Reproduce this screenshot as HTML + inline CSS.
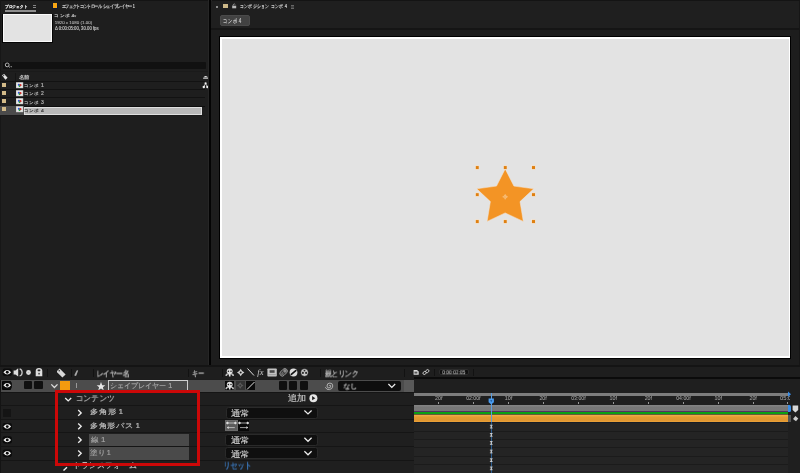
<!DOCTYPE html>
<html><head><meta charset="utf-8">
<style>
*{margin:0;padding:0;box-sizing:border-box}
html,body{width:800px;height:473px;overflow:hidden;background:#1d1d1d;font-family:"Liberation Sans",sans-serif;color:#bdbdbd;position:relative}
.a{position:absolute}
.t{position:absolute;white-space:nowrap;line-height:1;transform-origin:0 0}
svg{position:absolute;overflow:visible}
.s{will-change:transform}
.s text{stroke-linejoin:round}
</style></head><body>
<!-- ============ PROJECT PANEL ============ -->
<div class="a" style="left:0;top:0;width:209px;height:365px;background:#1e1e1e"></div>
<div class="a" style="left:0;top:0;width:800px;height:1px;background:#141414"></div>
<div class="a" style="left:0;top:0;width:1px;height:365px;background:#171717"></div>
<svg class="s" width="1" height="1" style="left:0;top:0;--b:5 4.4 27.5 8.75"><text fill="#d8d8d8" font-weight="700" font-size="4.265" transform="translate(4.729 8.068) scale(0.9065 1)" stroke="#d8d8d8" stroke-width="0.200">プロジェクト</text></svg>
<div class="a" style="left:4.5px;top:10px;width:31.5px;height:1.5px;background:#8e8e8e"></div>
<div class="a" style="left:33.4px;top:4.8px;width:2.9px;height:4.2px;background:#858585"></div>
<div class="a" style="left:33.4px;top:5.9px;width:2.9px;height:0.65px;background:#1e1e1e"></div>
<div class="a" style="left:33.4px;top:7.6px;width:2.9px;height:0.65px;background:#1e1e1e"></div>
<div class="a" style="left:52.3px;top:2.8px;width:5.6px;height:5.8px;background:#101830"></div><div class="a" style="left:52.9px;top:3.3px;width:4.4px;height:4.8px;background:#f7a614"></div>
<svg class="s" width="1" height="1" style="left:0;top:0;--b:62 4.5 139.4 9"><text fill="#cccccc" font-weight="400" font-size="4.545" transform="translate(61.734 8.364) scale(0.8373 1)" stroke="#cccccc" stroke-width="0.200">エフェクトコントロール シェイプレイヤー 1</text></svg>
<!-- thumbnail -->
<div class="a" style="left:2px;top:13.5px;width:51px;height:29.5px;background:#050505"></div>
<div class="a" style="left:2.5px;top:14px;width:49.5px;height:28px;background:#fafafa"></div>
<div class="a" style="left:3.7px;top:15.3px;width:47.3px;height:25.5px;background:#e3e3e3"></div>
<svg class="s" width="1" height="1" style="left:0;top:0;--b:55 13.75 73 17.5"><text fill="#c4c4c4" font-weight="400" font-size="4.213" transform="translate(54.274 17.037) scale(1.1491 1)" stroke="#c4c4c4" stroke-width="0.200">コンポ 4</text></svg>
<svg style="left:0;top:0" width="1" height="1"><path d="M73.9 15.6 H76.3 L75.1 17.2Z" fill="#c8c8c8"/></svg>
<svg class="s" width="1" height="1" style="left:0;top:0;--b:55 20.6 92 24.4"><text fill="#bdbdbd" font-weight="400" font-size="4.043" transform="translate(54.687 23.551) scale(1.1065 1)" stroke="#bdbdbd" stroke-width="0.060">1920 x 1080 (1.00)</text></svg>
<svg class="s" width="1" height="1" style="left:0;top:0;--b:55 26.25 98.75 30.6"><text fill="#bdbdbd" font-weight="400" font-size="4.628" transform="translate(54.915 29.628) scale(0.9186 1)" stroke="#bdbdbd" stroke-width="0.200">Δ 0:00:05:00, 30.00 fps</text></svg>
<!-- search -->
<div class="a" style="left:2.5px;top:62px;width:203.5px;height:6.8px;background:#111;border-radius:1px"></div>
<svg style="left:0;top:0" width="1" height="1"><g stroke="#cfcfcf" fill="none" stroke-width="0.85"><circle cx="7.2" cy="64.9" r="1.9"/><line x1="8.6" y1="66.3" x2="9.9" y2="67.5"/></g><path d="M10.2 66.2 L12.2 66.2 L11.2 67.4Z" fill="#aaa"/></svg>
<!-- header row -->
<div class="a" style="left:0;top:70.5px;width:209px;height:1px;background:#1a1a1a"></div>
<svg style="left:0;top:0" width="1" height="1"><path d="M2 75.2 L4.2 74 L7.6 77.8 L5.4 79.8 Z" fill="#e6e6e6"/><circle cx="3.7" cy="75.6" r="0.6" fill="#1e1e1e"/></svg>
<div class="a" style="left:15px;top:73px;width:1px;height:8px;background:#151515"></div>
<svg class="s" width="1" height="1" style="left:0;top:0;--b:18.75 75.3 29 80"><text fill="#c4c4c4" font-weight="400" font-size="4.947" transform="translate(18.697 79.357) scale(1.0625 1)" stroke="#c4c4c4" stroke-width="0.200">名前</text></svg>
<svg style="left:0;top:0" width="1" height="1"><path d="M203.1 77.6 Q205.7 74.6 208.3 77.6 Z" fill="#eee"/><rect x="203.1" y="78" width="5.2" height="0.7" fill="#ddd"/>
<g fill="#eee"><circle cx="205.6" cy="83.3" r="1.1"/><circle cx="203.8" cy="87" r="1.2"/><circle cx="207.4" cy="87" r="1.2"/></g><path d="M205.6 83.3 L203.8 87 M205.6 83.3 L207.4 87" stroke="#eee" stroke-width="0.7"/></svg>
<!-- rows -->
<div class="a" style="left:0;top:80.8px;width:205px;height:1px;background:#121212"></div>
<div class="a" style="left:0;top:89.1px;width:205px;height:1px;background:#121212"></div>
<div class="a" style="left:0;top:97.4px;width:205px;height:1px;background:#121212"></div>
<div class="a" style="left:0;top:105.5px;width:205px;height:1px;background:#0e0e0e"></div>
<div class="a" style="left:0;top:114.5px;width:205px;height:0.8px;background:#1a1a1a"></div>
<div class="a" style="left:0;top:106px;width:24px;height:8.5px;background:#4b4b4b"></div>
<div class="a" style="left:23.75px;top:106.5px;width:178px;height:8.2px;background:#b9b9b9;border:0.7px solid #e0e0e0"></div>
<!-- swatches & icons -->
<div class="a" style="left:2px;top:83.2px;width:4.3px;height:4.3px;background:#d2ba88"></div>
<div class="a" style="left:2px;top:91.2px;width:4.3px;height:4.3px;background:#d2ba88"></div>
<div class="a" style="left:2px;top:99.2px;width:4.3px;height:4.3px;background:#d2ba88"></div>
<div class="a" style="left:2px;top:107.2px;width:4.3px;height:4.3px;background:#d2ba88"></div>
<svg style="left:0;top:0" width="1" height="1">
<g id="ci"><rect x="16" y="82.2" width="7.2" height="6" fill="#c8c8c8"/><rect x="16.6" y="82.8" width="6" height="4.8" fill="#ebebeb"/><circle cx="18.9" cy="84.8" r="1.15" fill="#2a62e0"/><circle cx="20.4" cy="85.2" r="1.15" fill="#d82828"/><circle cx="19.5" cy="86.2" r="0.85" fill="#20a040"/></g>
<use href="#ci" y="8"/><use href="#ci" y="16"/><use href="#ci" y="24"/>
</svg>
<svg class="s" width="1" height="1" style="left:0;top:0;--b:24.5 83.4 43 87.4"><text fill="#b4b4b4" font-weight="400" font-size="4.494" transform="translate(23.750 86.906) scale(1.1132 1)" stroke="#b4b4b4" stroke-width="0.200">コンポ 1</text></svg>
<svg class="s" width="1" height="1" style="left:0;top:0;--b:24.5 91.8 43 95.8"><text fill="#b4b4b4" font-weight="400" font-size="4.494" transform="translate(23.750 95.306) scale(1.1132 1)" stroke="#b4b4b4" stroke-width="0.200">コンポ 2</text></svg>
<svg class="s" width="1" height="1" style="left:0;top:0;--b:24.5 100.2 43 104.2"><text fill="#b4b4b4" font-weight="400" font-size="4.494" transform="translate(23.752 103.706) scale(1.1102 1)" stroke="#b4b4b4" stroke-width="0.200">コンポ 3</text></svg>
<svg class="s" width="1" height="1" style="left:0;top:0;--b:24.5 108.2 43 112.1"><text fill="#383838" font-weight="400" font-size="4.382" transform="translate(23.754 111.618) scale(1.1356 1)" stroke="#383838" stroke-width="0.200">コンポ 4</text></svg>
<!-- divider -->
<div class="a" style="left:208.4px;top:0;width:3.6px;height:365px;background:#262626"></div><div class="a" style="left:209.4px;top:0;width:1.6px;height:365px;background:#030303"></div>

<!-- ============ COMP PANEL ============ -->
<div class="a" style="left:211px;top:1px;width:589px;height:26.5px;background:#1f1f1f"></div>
<div class="a" style="left:211px;top:27.5px;width:589px;height:2.3px;background:#151515"></div>
<div class="a" style="left:211px;top:29.8px;width:589px;height:335px;background:#1d1d1d"></div>
<div class="a" style="left:798.5px;top:1px;width:1.5px;height:364px;background:#161616"></div>
<div class="a" style="left:216.2px;top:6px;width:1.8px;height:1.5px;background:#8a8a8a"></div>
<div class="a" style="left:222.5px;top:3.5px;width:5px;height:4.5px;background:#cdb888"></div>
<svg style="left:0;top:0" width="1" height="1"><rect x="232.2" y="5.7" width="4" height="2.6" fill="#b8b8b8"/><path d="M233 5.8 V4.8 Q234.2 3.2 235.3 4.4" stroke="#b0b0b0" stroke-width="0.7" fill="none"/></svg>
<svg class="s" width="1" height="1" style="left:0;top:0;--b:240.4 3.6 286 8.4"><text fill="#d0d0d0" font-weight="400" font-size="5.393" transform="translate(239.786 7.807) scale(0.7593 1)" stroke="#d0d0d0" stroke-width="0.200">コンポジション コンポ 4</text></svg>
<div class="a" style="left:290.5px;top:4.5px;width:3px;height:1px;background:#666;box-shadow:0 1.5px 0 #666,0 3px 0 #666"></div>
<div class="a" style="left:219.5px;top:15px;width:30.5px;height:10.7px;background:#424242;border:0.6px solid #4a4a4a;border-radius:2px"></div>
<svg class="s" width="1" height="1" style="left:0;top:0;--b:223.75 17.5 240.25 23.25"><text fill="#d4d4d4" font-weight="400" font-size="6.461" transform="translate(223.084 22.539) scale(0.6869 1)" stroke="#d4d4d4" stroke-width="0.140">コンポ 4</text></svg>
<!-- canvas -->
<div class="a" style="left:219px;top:36px;width:572px;height:323px;background:#000"></div>
<div class="a" style="left:220px;top:37px;width:570px;height:320.5px;background:#fff"></div>
<div class="a" style="left:221.5px;top:38.5px;width:567px;height:317.3px;background:#e3e3e3"></div>
<svg style="left:0;top:0" width="1" height="1">
  <polygon points="505.2,168.9 513.9,186.1 533.7,188.8 520,201.6 523.3,221.4 505.2,212.9 487.1,221.4 490.4,201.6 476.7,188.8 496.5,186.1" fill="#f39425" stroke="#f3e6da" stroke-width="0.5"/>
  <g fill="#df7f10" stroke="#f4efe8" stroke-width="0.7"><rect x="475.30" y="165.70" width="3.8" height="3.8"/><rect x="475.30" y="192.80" width="3.8" height="3.8"/><rect x="475.30" y="219.70" width="3.8" height="3.8"/><rect x="503.30" y="165.70" width="3.8" height="3.8"/><rect x="503.30" y="219.70" width="3.8" height="3.8"/><rect x="531.60" y="165.70" width="3.8" height="3.8"/><rect x="531.60" y="192.80" width="3.8" height="3.8"/><rect x="531.60" y="219.70" width="3.8" height="3.8"/></g>
  <g stroke="#f9cf9c" stroke-width="0.55" fill="none"><circle cx="505.2" cy="196.8" r="1.5"/><path d="M502.4 196.8 H508 M505.2 194 V199.6"/></g>
</svg>

<!-- ============ TIMELINE PANEL ============ -->
<div class="a" style="left:0;top:365px;width:800px;height:2px;background:#141414"></div>
<div class="a" style="left:0;top:366.8px;width:800px;height:12.7px;background:#1e1e1e"></div>
<div class="a" style="left:0;top:379.5px;width:414px;height:12px;background:#4c4c4c"></div>
<div class="a" style="left:0;top:391.5px;width:414px;height:82px;background:#1f1f1f"></div>

<!-- header icons -->
<svg style="left:0;top:0" width="1" height="1">
 <g id="eye"><rect x="2.6" y="368.6" width="9.3" height="7.4" rx="2" fill="#0b0b0b"/><path d="M3.4 372.3 Q7.25 367.8 11.1 372.3 Q7.25 376.8 3.4 372.3Z" fill="#f2f2f2"/><circle cx="7.25" cy="372.3" r="1.45" fill="#0b0b0b"/></g>
 <path d="M13.6 370.4 H15.4 L18.2 368.2 V376.6 L15.4 374.4 H13.6Z" fill="#dcdcdc"/>
 <path d="M19.6 368.9 A3.5 3.7 0 0 1 19.6 376" stroke="#c8c8c8" stroke-width="1.3" fill="none"/>
 <circle cx="28.5" cy="372.5" r="2.4" fill="#ddd"/><circle cx="28.5" cy="372.5" r="0.8" fill="#bbb"/>
 <path d="M35.7 376.2 V371 Q35.7 368.1 39 368.1 Q42.3 368.1 42.3 371 V376.2Z" fill="#dedede"/><rect x="37.6" y="369.6" width="2.8" height="1.6" rx="0.6" fill="#2a2a2a"/><rect x="38.4" y="372.9" width="1.3" height="1.6" fill="#2a2a2a"/>
 <path d="M57 371 L59.6 368.6 L65.6 374.6 L62.4 377.6 L57 372.2Z" fill="#d8d8d8"/><circle cx="59.2" cy="370.7" r="0.7" fill="#1e1e1e"/>
 <path d="M74.3 375.2 L76.6 370.6 Q77.3 369.8 78.2 370.6 L76.3 375.6 Q75.3 376.5 74.3 375.2Z" fill="#a8a8a8"/>
</svg>
<div class="a" style="left:47px;top:369px;width:1px;height:8px;background:#121212"></div>
<div class="a" style="left:70.5px;top:369px;width:1px;height:8px;background:#121212"></div>
<div class="a" style="left:93px;top:369px;width:1px;height:8px;background:#121212"></div>
<div class="a" style="left:187.5px;top:369px;width:1px;height:8px;background:#121212"></div>
<div class="a" style="left:221.5px;top:369px;width:1px;height:8px;background:#121212"></div>
<div class="a" style="left:320px;top:369px;width:1px;height:8px;background:#121212"></div>
<div class="a" style="left:403.9px;top:369px;width:1px;height:8px;background:#121212"></div>
<svg class="s" width="1" height="1" style="left:0;top:0;--b:97.5 370 130 377.5"><text fill="#d4d4d4" font-weight="400" font-size="7.813" transform="translate(96.544 376.406) scale(0.8739 1)" stroke="#d4d4d4" stroke-width="0.140">レイヤー名</text></svg>
<svg class="s" width="1" height="1" style="left:0;top:0;--b:192.5 370.25 204 377.25"><text fill="#cccccc" font-weight="400" font-size="8.046" transform="translate(191.941 376.124) scale(0.7726 1)" stroke="#cccccc" stroke-width="0.140">キー</text></svg>
<svg class="s" width="1" height="1" style="left:0;top:0;--b:325 370 358 377.4"><text fill="#d0d0d0" font-weight="400" font-size="7.551" transform="translate(324.933 376.343) scale(0.8937 1)" stroke="#d0d0d0" stroke-width="0.140">親とリンク</text></svg>
<!-- switches header -->
<svg style="left:0;top:0" width="1" height="1">
 <g id="shy"><path d="M225.4 376 Q225.4 373.2 228 373.2 H231.4 Q234 373.2 234 376 H232.4 Q232.2 374.6 231 374.6 H228.4 Q227.2 374.6 227 376Z" fill="#bdbdbd"/><ellipse cx="229.7" cy="371.3" rx="2.9" ry="2.8" fill="#dedede"/><rect x="228.9" y="372.5" width="1.6" height="3.9" rx="0.5" fill="#e6e6e6"/><circle cx="228.4" cy="371.2" r="0.75" fill="#1e1e1e"/><circle cx="231" cy="371.2" r="0.75" fill="#1e1e1e"/></g>
 <polygon points="240.70,368.80 242.18,371.02 244.40,372.50 242.18,373.98 240.70,376.20 239.22,373.98 237.00,372.50 239.22,371.02" fill="#d2d2d2"/><circle cx="240.7" cy="372.5" r="1.0" fill="#1e1e1e"/>
 <path d="M247.5 368.5 L254 375.5" stroke="#ddd" stroke-width="1"/>
 <text x="257.3" y="375.4" font-family="Liberation Serif" font-style="italic" font-size="8.5" fill="#ccc">fx</text>
 <rect x="267.4" y="368.4" width="9.4" height="8.2" rx="0.8" fill="#c4c4c4"/><rect x="269.6" y="370.2" width="5" height="2.6" fill="#4a4a4a"/><rect x="268.4" y="374.4" width="7.4" height="0.7" fill="#8a8a8a"/>
 <g transform="rotate(-45 283.5 372.4)"><rect x="279.3" y="369.9" width="8.6" height="5" rx="2.5" fill="#3a3a3a" stroke="#a8a8a8" stroke-width="0.8"/><circle cx="285.6" cy="372.4" r="1.7" fill="#8a8a8a"/><path d="M281 371.2 V373.6 M282.4 371.2 V373.6" stroke="#cfcfcf" stroke-width="0.55"/></g>
 <circle cx="293.5" cy="372.5" r="3.9" fill="#dcdcdc"/><path d="M291.3 374.3 L295.8 370.6" stroke="#111" stroke-width="1.7" stroke-linecap="round"/>
 <circle cx="304.5" cy="372.5" r="3.7" fill="#c8c8c8" stroke="#222" stroke-width="0.4"/><g fill="#2a2a2a"><circle cx="302.9" cy="372.9" r="1.05"/><circle cx="306.1" cy="372.9" r="1.05"/><circle cx="304.5" cy="370.6" r="0.9"/></g><path d="M304.5 372.5 V375.8" stroke="#c8c8c8" stroke-width="0.6"/>
</svg>
<!-- timeline header icons -->
<svg style="left:0;top:0" width="1" height="1">
 <path d="M413.6 370 H417 L418.7 371.6 V374.7 H413.6Z" fill="#ddd"/><rect x="414.4" y="371.6" width="3" height="2" fill="#555"/>
 <g stroke="#ccc" stroke-width="0.9" fill="none"><rect x="422.8" y="371.6" width="3.6" height="2.6" rx="1.3" transform="rotate(-40 424.6 372.9)"/><rect x="425.5" y="369.9" width="3.6" height="2.6" rx="1.3" transform="rotate(-40 427.3 371.2)"/></g>
</svg>
<div class="a" style="left:434.4px;top:369px;width:1px;height:7px;background:#121212"></div>
<div class="a" style="left:439px;top:368.6px;width:30.4px;height:6.8px;background:#0f0f0f;border:0.6px solid #2c2c2c;border-radius:2px"></div>
<svg class="s" width="1" height="1" style="left:0;top:0;--b:442.4 370.1 465.25 374.25"><text fill="#c8c8c8" font-weight="400" font-size="5.845" transform="translate(442.253 374.192) scale(0.8388 1)" stroke="#c8c8c8" stroke-width="0.060">0:00:02:05</text></svg>
<div class="a" style="left:473.1px;top:368.5px;width:1px;height:7px;background:#121212"></div>

<!-- layer row contents -->
<div class="a" style="left:2px;top:381px;width:9.2px;height:8.5px;background:#050505;border-radius:1px"></div>
<svg style="left:0;top:0" width="1" height="1"><use href="#eye" y="13"/></svg>
<div class="a" style="left:23.8px;top:380.8px;width:8.1px;height:8.5px;background:#101010;border-radius:1px"></div>
<div class="a" style="left:34.4px;top:380.8px;width:8.7px;height:8.5px;background:#101010;border-radius:1px"></div>
<svg style="left:0;top:0" width="1" height="1"><path d="M51.3 384.4 L54.4 387.5 L57.5 384.4" stroke="#ddd" stroke-width="1.3" fill="none"/></svg>
<div class="a" style="left:60px;top:380.5px;width:9.5px;height:9.5px;background:#f39a0f"></div>
<div class="a" style="left:75.6px;top:382.5px;width:1.3px;height:5.5px;background:#999"></div>
<svg style="left:0;top:0" width="1" height="1"><path d="M101 382 L102.2 385.2 L105.3 385.3 L102.9 387.3 L103.7 390.2 L101 388.5 L98.3 390.2 L99.1 387.3 L96.7 385.3 L99.8 385.2Z" fill="#e8e8e8"/></svg>
<div class="a" style="left:108px;top:379.8px;width:80px;height:13px;border:1px solid #cfcfcf;background:#4c4c4c"></div>
<svg class="s" width="1" height="1" style="left:0;top:0;--b:110.6 381.75 175 388.9"><text fill="#a8a8a8" font-weight="400" font-size="7.222" transform="translate(109.870 387.889) scale(1.0101 1)" stroke="#a8a8a8" stroke-width="0.140">シェイプレイヤー 1</text></svg>
<!-- switches row -->
<div class="a" style="left:225px;top:381px;width:9.2px;height:9px;background:#0a0a0a"></div>
<svg style="left:0;top:0" width="1" height="1"><use href="#shy" y="13.2"/></svg>
<div class="a" style="left:235.5px;top:381px;width:9.5px;height:9px;background:#333"></div>
<svg style="left:0;top:0" width="1" height="1"><polygon points="240.20,382.20 241.54,384.16 243.50,385.50 241.54,386.84 240.20,388.80 238.86,386.84 236.90,385.50 238.86,384.16" fill="#5a5a5a"/><circle cx="240.2" cy="385.5" r="0.9" fill="#333"/></svg>
<div class="a" style="left:246px;top:381px;width:9px;height:9px;background:#0a0a0a"></div>
<svg style="left:0;top:0" width="1" height="1"><path d="M247 389.5 L254.5 382" stroke="#e0e0e0" stroke-width="1"/></svg>
<div class="a" style="left:278.5px;top:381px;width:8px;height:8.5px;background:#101010;border-radius:1px"></div>
<div class="a" style="left:289.4px;top:381px;width:8px;height:8.5px;background:#101010;border-radius:1px"></div>
<div class="a" style="left:300px;top:381px;width:8px;height:8.5px;background:#101010;border-radius:1px"></div>
<svg style="left:0;top:0" width="1" height="1"><g stroke="#b4b4b4" stroke-width="0.95" fill="none"><path d="M329.2 386 A0.8 0.8 0 1 1 330.8 386 A1.9 1.9 0 1 1 327 386 A2.9 2.9 0 1 1 332.8 386 A3.9 3.9 0 0 1 325.3 387.2"/></g></svg>
<div class="a" style="left:337.5px;top:380.9px;width:63px;height:10px;background:#0e0e0e;border-radius:2px"></div>
<svg class="s" width="1" height="1" style="left:0;top:0;--b:343.75 383 356.9 389.9"><text fill="#dddddd" font-weight="400" font-size="7.340" transform="translate(343.463 388.505) scale(0.9789 1)" stroke="#dddddd" stroke-width="0.140">なし</text></svg>
<svg style="left:0;top:0" width="1" height="1"><path d="M388.4 384 L391.8 387.5 L395.2 384" stroke="#eee" stroke-width="1.2" fill="none"/></svg>

<!-- property rows -->
<div class="a" style="left:0;top:391.5px;width:414px;height:1px;background:#151515"></div>
<div class="a" style="left:0;top:404.8px;width:414px;height:1px;background:#151515"></div>
<div class="a" style="left:0;top:418.6px;width:414px;height:1px;background:#151515"></div>
<div class="a" style="left:0;top:432.4px;width:414px;height:1px;background:#151515"></div>
<div class="a" style="left:0;top:446.2px;width:414px;height:1px;background:#151515"></div>
<div class="a" style="left:0;top:459.9px;width:414px;height:1px;background:#151515"></div>
<div class="a" style="left:0;top:380px;width:1px;height:93px;background:#141414"></div>
<div class="a" style="left:3px;top:408.5px;width:8.3px;height:8.5px;background:#141414"></div>
<svg style="left:0;top:0" width="1" height="1"><use href="#eye" y="54.3"/><use href="#eye" y="67.6"/><use href="#eye" y="81"/></svg>
<svg style="left:0;top:0" width="1" height="1"><g stroke="#ececec" stroke-width="1.35" fill="none">
 <path d="M65.2 397.9 L68.2 400.9 L71.2 397.9"/>
 <path d="M78.2 410 L81.2 412.9 L78.2 415.8"/>
 <path d="M78.2 423.4 L81.2 426.3 L78.2 429.2"/>
 <path d="M78.2 437 L81.2 439.9 L78.2 442.8"/>
 <path d="M78.2 450.4 L81.2 453.3 L78.2 456.2"/>
 <path d="M63.5 470.6 L67 467.2"/>
</g></svg>
<svg class="s" width="1" height="1" style="left:0;top:0;--b:76.9 395.6 113 401.9"><text fill="#c4c4c4" font-weight="400" font-size="7.875" transform="translate(75.779 400.955) scale(0.9491 1)" stroke="#c4c4c4" stroke-width="0.140">コンテンツ</text></svg>
<svg class="s" width="1" height="1" style="left:0;top:0;--b:90.6 408.75 121.9 415.6"><text fill="#c4c4c4" font-weight="400" font-size="6.990" transform="translate(90.181 414.482) scale(1.1980 1)" stroke="#c4c4c4" stroke-width="0.140">多角形 1</text></svg>
<svg class="s" width="1" height="1" style="left:0;top:0;--b:90.6 421.9 138.1 428.75"><text fill="#c4c4c4" font-weight="400" font-size="6.990" transform="translate(90.189 427.632) scale(1.1762 1)" stroke="#c4c4c4" stroke-width="0.140">多角形パス 1</text></svg>
<div class="a" style="left:88.7px;top:433.7px;width:100px;height:12.3px;background:#4a4a4a"></div>
<div class="a" style="left:88.7px;top:447.2px;width:100px;height:12.4px;background:#4a4a4a"></div>
<svg class="s" width="1" height="1" style="left:0;top:0;--b:90.5 436.25 104.75 443"><text fill="#a8a8a8" font-weight="400" font-size="7.258" transform="translate(90.579 442.056) scale(1.0921 1)" stroke="#a8a8a8" stroke-width="0.140">線 1</text></svg>
<svg class="s" width="1" height="1" style="left:0;top:0;--b:90.5 449 110.75 455.75"><text fill="#a8a8a8" font-weight="400" font-size="6.818" transform="translate(90.428 454.591) scale(1.0615 1)" stroke="#a8a8a8" stroke-width="0.140">塗り 1</text></svg>
<svg class="s" width="1" height="1" style="left:0;top:0;--b:76 462 135 468.5"><text fill="#c4c4c4" font-weight="400" font-size="7.647" transform="translate(73.242 467.506) scale(1.0020 1)" stroke="#c4c4c4" stroke-width="0.140">トランスフォーム</text></svg>
<!-- mode column -->
<svg class="s" width="1" height="1" style="left:0;top:0;--b:288 394 305 402.4"><text fill="#cccccc" font-weight="400" font-size="8.936" transform="translate(287.819 401.417) scale(1.0119 1)" stroke="#cccccc" stroke-width="0.140">追加</text></svg>
<svg style="left:0;top:0" width="1" height="1"><circle cx="313.4" cy="398.2" r="4" fill="#e6e6e6"/><path d="M312.1 396.1 L315.3 398.2 L312.1 400.3Z" fill="#1e1e1e"/></svg>
<div class="a" style="left:225.5px;top:406.8px;width:92.3px;height:12px;background:#0f0f0f;border:0.7px solid #2a2a2a;border-radius:2.5px"></div>
<div class="a" style="left:225.2px;top:433.7px;width:92.5px;height:12px;background:#0f0f0f;border:0.7px solid #2a2a2a;border-radius:2.5px"></div>
<div class="a" style="left:225.2px;top:447.2px;width:92.5px;height:12px;background:#0f0f0f;border:0.7px solid #2a2a2a;border-radius:2.5px"></div>
<svg class="s" width="1" height="1" style="left:0;top:0;--b:230.75 409.4 248 416.9"><text fill="#d0d0d0" font-weight="400" font-size="7.895" transform="translate(230.564 415.953) scale(1.1811 1)" stroke="#d0d0d0" stroke-width="0.140">通常</text></svg>
<svg class="s" width="1" height="1" style="left:0;top:0;--b:230.75 436.75 248 444.25"><text fill="#d0d0d0" font-weight="400" font-size="7.895" transform="translate(230.564 443.303) scale(1.1811 1)" stroke="#d0d0d0" stroke-width="0.140">通常</text></svg>
<svg class="s" width="1" height="1" style="left:0;top:0;--b:230.75 450.25 248 457.75"><text fill="#d0d0d0" font-weight="400" font-size="7.895" transform="translate(230.564 456.803) scale(1.1811 1)" stroke="#d0d0d0" stroke-width="0.140">通常</text></svg>
<svg style="left:0;top:0" width="1" height="1"><g stroke="#eee" stroke-width="1.2" fill="none">
 <path d="M304.4 410.5 L308 414 L311.6 410.5"/>
 <path d="M304.4 437.8 L308 441.3 L311.6 437.8"/>
 <path d="M304.4 451.3 L308 454.8 L311.6 451.3"/>
</g></svg>
<div class="a" style="left:224.8px;top:420px;width:12.8px;height:11.1px;background:#5c5c5c;border:0.6px solid #6a6a6a"></div>
<div class="a" style="left:237.6px;top:420.3px;width:11.9px;height:10.6px;background:#080808"></div>
<svg style="left:0;top:0" width="1" height="1"><g stroke="#e0e0e0" stroke-width="0.7" fill="#e8e8e8">
 <path d="M227.4 423 H235.4"/><circle cx="227.4" cy="423" r="0.9"/><circle cx="235.4" cy="423" r="0.9"/>
 <path d="M228.2 427.6 H234.8"/><path d="M226.8 427.6 L228.6 426.3 V428.9Z" stroke="none"/>
 <path d="M239.5 423 H247.7"/><circle cx="239.5" cy="423" r="0.9"/><circle cx="247.7" cy="423" r="0.9"/>
 <path d="M240 427.6 H246.6"/><path d="M248.2 427.6 L246.4 426.3 V428.9Z" stroke="none"/>
</g></svg>
<svg class="s" width="1" height="1" style="left:0;top:0;--b:224.75 462.25 249.5 469.75"><text fill="#4088d8" font-weight="400" font-size="8.621" transform="translate(223.169 468.543) scale(0.7975 1)" stroke="#4088d8" stroke-width="0.140">リセット</text></svg>

<!-- timeline graph -->
<div class="a" style="left:404px;top:379.5px;width:10px;height:12px;background:#595959"></div>
<div class="a" style="left:413.8px;top:377.2px;width:386.2px;height:1.4px;background:#0b0b0b"></div>
<div class="a" style="left:414px;top:378.6px;width:386px;height:94.4px;background:#1f1f1f"></div>
<div class="a" style="left:414px;top:392.7px;width:374px;height:3px;background:#7d7d7d"></div>
<div class="a" style="left:414px;top:405px;width:374px;height:5.7px;background:linear-gradient(#858585,#777 40%,#787878)"></div>
<div class="a" style="left:414px;top:410.7px;width:374px;height:1.1px;background:#553262"></div>
<div class="a" style="left:414px;top:411.8px;width:374px;height:2.4px;background:#0ca014"></div>
<div class="a" style="left:414px;top:414.2px;width:374px;height:0.7px;background:#6a5a38"></div>
<div class="a" style="left:414px;top:414.9px;width:374px;height:7px;background:linear-gradient(#f2ad4c,#e59c32 30%,#e09630 75%,#eaa23a)"></div>
<div class="a" style="left:414px;top:422px;width:374px;height:51px;background:#242424"></div>
<div class="a" style="left:414px;top:421.9px;width:374px;height:1px;background:#161c26"></div>
<div class="a" style="left:414px;top:430.6px;width:374px;height:0.9px;background:#1b1b1b"></div>
<div class="a" style="left:414px;top:439px;width:374px;height:0.9px;background:#1b1b1b"></div>
<div class="a" style="left:414px;top:447px;width:374px;height:0.9px;background:#1b1b1b"></div>
<div class="a" style="left:414px;top:455.8px;width:374px;height:0.9px;background:#1b1b1b"></div>
<div class="a" style="left:414px;top:464.2px;width:374px;height:0.9px;background:#1b1b1b"></div>
<div class="a" style="left:788px;top:405px;width:3px;height:7px;background:#3a8ee8;border-radius:0 1.5px 1.5px 0"></div>
<div class="a" style="left:788px;top:415px;width:2.5px;height:7px;background:#555"></div>
<svg style="left:0;top:0" width="1" height="1">
 <path d="M788 391.5 L791 394.2 L788 396.9Z" fill="#3a8ee8"/>
 <path d="M792.6 405.5 H798.2 V410 L795.4 412.6 L792.6 410Z" fill="#d8d8d8"/>
 <path d="M793 419 L795.4 416 L798.3 418.6 L796 421.3Z" fill="#ccc"/>
</svg>
<div class="a" style="left:438.35px;top:402.4px;width:0.8px;height:1.6px;background:#999"></div>
<svg class="s" width="1" height="1" style="left:0;top:0;--b:435.34999999999997 396.5 442.45 400"><text fill="#a0a0a0" font-weight="400" font-size="4.730" transform="translate(435.086 399.953) scale(1.1183 1)" stroke="#a0a0a0" stroke-width="0.060">20f</text></svg>
<div class="a" style="left:473.10px;top:402.4px;width:0.8px;height:1.6px;background:#999"></div>
<svg class="s" width="1" height="1" style="left:0;top:0;--b:466.29999999999995 396.5 480.5 400"><text fill="#a0a0a0" font-weight="400" font-size="4.730" transform="translate(466.145 399.953) scale(1.0908 1)" stroke="#a0a0a0" stroke-width="0.060">02:00f</text></svg>
<div class="a" style="left:508.35px;top:402.4px;width:0.8px;height:1.6px;background:#999"></div>
<svg class="s" width="1" height="1" style="left:0;top:0;--b:505.2 396.5 512.3 400"><text fill="#a0a0a0" font-weight="400" font-size="4.730" transform="translate(504.824 399.953) scale(1.1352 1)" stroke="#a0a0a0" stroke-width="0.060">10f</text></svg>
<div class="a" style="left:542.85px;top:402.4px;width:0.8px;height:1.6px;background:#999"></div>
<svg class="s" width="1" height="1" style="left:0;top:0;--b:539.7 396.5 546.8 400"><text fill="#a0a0a0" font-weight="400" font-size="4.730" transform="translate(539.436 399.953) scale(1.1183 1)" stroke="#a0a0a0" stroke-width="0.060">20f</text></svg>
<div class="a" style="left:578.10px;top:402.4px;width:0.8px;height:1.6px;background:#999"></div>
<svg class="s" width="1" height="1" style="left:0;top:0;--b:571.4 396.5 585.6 400"><text fill="#a0a0a0" font-weight="400" font-size="4.730" transform="translate(571.245 399.953) scale(1.0908 1)" stroke="#a0a0a0" stroke-width="0.060">03:00f</text></svg>
<div class="a" style="left:613.10px;top:402.4px;width:0.8px;height:1.6px;background:#999"></div>
<svg class="s" width="1" height="1" style="left:0;top:0;--b:609.95 396.5 617.05 400"><text fill="#a0a0a0" font-weight="400" font-size="4.730" transform="translate(609.574 399.953) scale(1.1352 1)" stroke="#a0a0a0" stroke-width="0.060">10f</text></svg>
<div class="a" style="left:648.10px;top:402.4px;width:0.8px;height:1.6px;background:#999"></div>
<svg class="s" width="1" height="1" style="left:0;top:0;--b:644.95 396.5 652.05 400"><text fill="#a0a0a0" font-weight="400" font-size="4.730" transform="translate(644.686 399.953) scale(1.1183 1)" stroke="#a0a0a0" stroke-width="0.060">20f</text></svg>
<div class="a" style="left:683.10px;top:402.4px;width:0.8px;height:1.6px;background:#999"></div>
<svg class="s" width="1" height="1" style="left:0;top:0;--b:676.4 396.5 690.6 400"><text fill="#a0a0a0" font-weight="400" font-size="4.730" transform="translate(676.245 399.953) scale(1.0908 1)" stroke="#a0a0a0" stroke-width="0.060">04:00f</text></svg>
<div class="a" style="left:718.10px;top:402.4px;width:0.8px;height:1.6px;background:#999"></div>
<svg class="s" width="1" height="1" style="left:0;top:0;--b:714.95 396.5 722.05 400"><text fill="#a0a0a0" font-weight="400" font-size="4.730" transform="translate(714.574 399.953) scale(1.1352 1)" stroke="#a0a0a0" stroke-width="0.060">10f</text></svg>
<div class="a" style="left:752.90px;top:402.4px;width:0.8px;height:1.6px;background:#999"></div>
<svg class="s" width="1" height="1" style="left:0;top:0;--b:749.75 396.5 756.8499999999999 400"><text fill="#a0a0a0" font-weight="400" font-size="4.730" transform="translate(749.486 399.953) scale(1.1183 1)" stroke="#a0a0a0" stroke-width="0.060">20f</text></svg>
<div class="a" style="left:787.10px;top:402.4px;width:0.8px;height:1.6px;background:#999"></div>
<svg class="s" width="1" height="1" style="left:0;top:0;--b:780.1 396.5 794.3000000000001 400"><text fill="#a0a0a0" font-weight="400" font-size="4.930" transform="translate(779.925 399.951) scale(1.1824 1)" stroke="#a0a0a0" stroke-width="0.060">05:00</text></svg>

<div class="a" style="left:790.3px;top:396px;width:9.7px;height:9px;background:#1f1f1f"></div>
<div class="a" style="left:490.6px;top:392.5px;width:1px;height:30px;background:#5a9ee0"></div>
<div class="a" style="left:490.6px;top:422px;width:1px;height:51px;background:#2e5f92"></div>
<svg style="left:0;top:0" width="1" height="1"><path d="M488.6 398.6 H493.9 V402.3 L491.25 404.5 L488.6 402.3Z" fill="#4a9cf0"/><path d="M490.2 400.2 H492.3 L491.25 401.9Z" fill="#1a4f8a"/>
<g fill="#dcdcdc"><rect x="489.9" y="424.8" width="2.7" height="0.8"/><rect x="489.9" y="427.6" width="2.7" height="0.8"/><rect x="490.7" y="425.4" width="1.1" height="2.4"/><rect x="489.9" y="433.0" width="2.7" height="0.8"/><rect x="489.9" y="435.8" width="2.7" height="0.8"/><rect x="490.7" y="433.6" width="1.1" height="2.4"/><rect x="489.9" y="441.1" width="2.7" height="0.8"/><rect x="489.9" y="443.9" width="2.7" height="0.8"/><rect x="490.7" y="441.7" width="1.1" height="2.4"/><rect x="489.9" y="449.7" width="2.7" height="0.8"/><rect x="489.9" y="452.5" width="2.7" height="0.8"/><rect x="490.7" y="450.3" width="1.1" height="2.4"/><rect x="489.9" y="458.4" width="2.7" height="0.8"/><rect x="489.9" y="461.2" width="2.7" height="0.8"/><rect x="490.7" y="459.0" width="1.1" height="2.4"/><rect x="489.9" y="466.6" width="2.7" height="0.8"/><rect x="489.9" y="469.4" width="2.7" height="0.8"/><rect x="490.7" y="467.2" width="1.1" height="2.4"/></g></svg>
<!-- red box -->
<div class="a" style="left:55px;top:390px;width:145px;height:76px;border:3px solid #cc0808"></div>
<script>
(function(){
var c=document.createElement('canvas').getContext('2d');
document.querySelectorAll('svg.s').forEach(function(s){
  var b=getComputedStyle(s).getPropertyValue('--b').trim().split(/\s+/).map(parseFloat);
  var t=s.querySelector('text'); var w=t.getAttribute('font-weight')||'400';
  c.font=w+' 100px "Liberation Sans", sans-serif';
  var s0=t.textContent, m=c.measureText(s0);
  var L=m.actualBoundingBoxLeft, R=m.actualBoundingBoxRight, A=m.actualBoundingBoxAscent, D=m.actualBoundingBoxDescent;
  var nj=s0.replace(/[\x00-\x7f]/g,'');
  if(nj.length && nj!=='\u0394'){var m2=c.measureText(nj);A=m2.actualBoundingBoxAscent;D=m2.actualBoundingBoxDescent;}
  if(!(R+L>0 && A+D>0)) return;
  var k=(b[3]-b[1])/(A+D); var fs=100*k;
  var sx=(b[2]-b[0])/((L+R)*k);
  var tx=b[0]+sx*L*k, ty=b[1]+A*k;
  t.setAttribute('font-size',fs.toFixed(3)); t.setAttribute('stroke',t.getAttribute('fill')); t.setAttribute('stroke-width',(nj.length?(fs<6?0.2:0.14):0.06).toFixed(3));
  t.setAttribute('transform','translate('+tx.toFixed(3)+' '+ty.toFixed(3)+') scale('+sx.toFixed(4)+' 1)');
});
})();
</script>
</body></html>
